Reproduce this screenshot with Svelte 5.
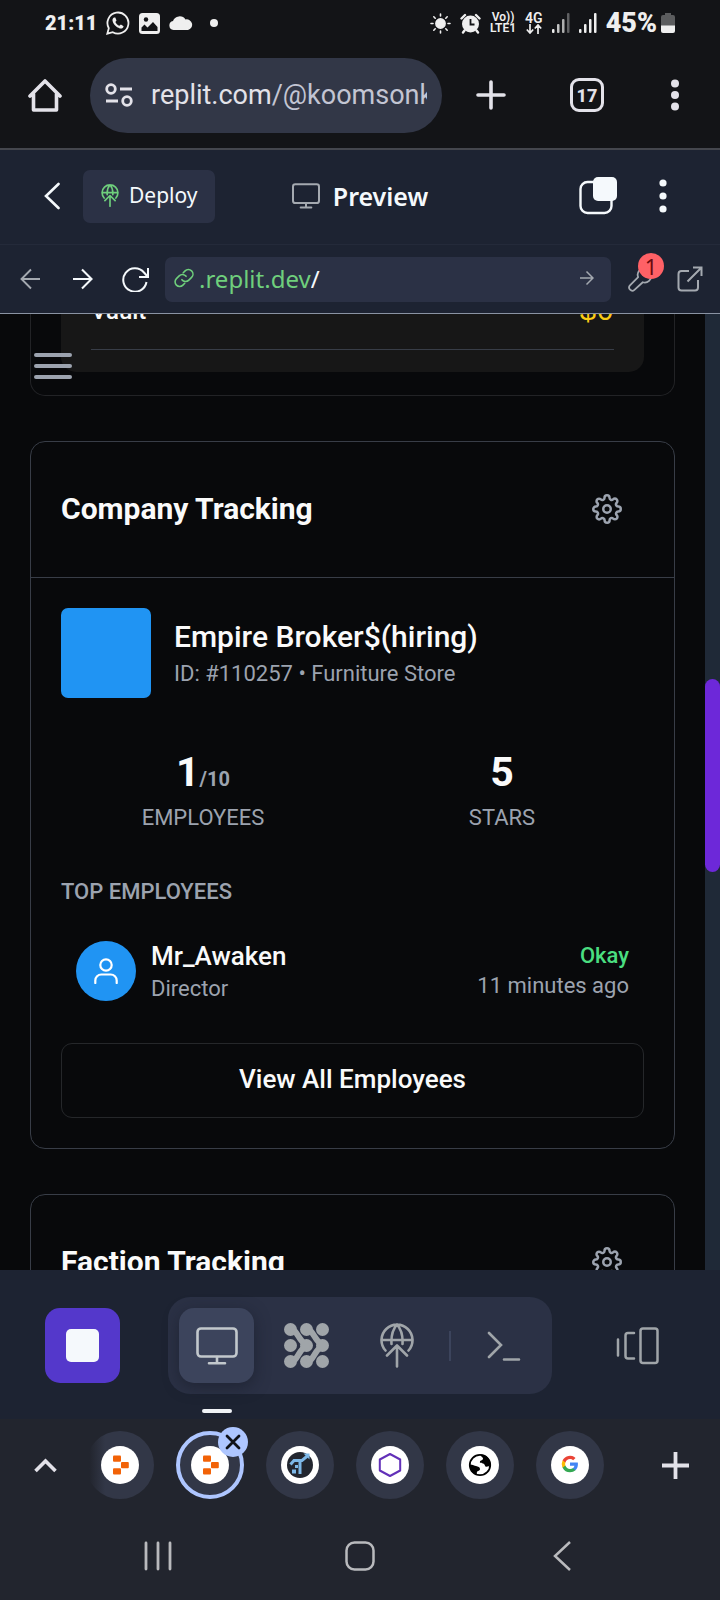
<script>
  const stats = [
    { value: '1', of: '/10', label: 'EMPLOYEES' },
    { value: '5', of: '', label: 'STARS' }
  ];
  const tabs = ['replit', 'replit', 'trade', 'hexagon', 'globe', 'google'];
  const active = 1;
  const dots = [6.5, 22.5, 38.5];
</script>

{#snippet monitor(w, h, stroke)}
  <svg width={w} height={h} viewBox="0 0 42 38" fill="none" stroke="currentColor" stroke-width={stroke} stroke-linecap="round">
    <rect x="1.5" y="1.5" width="39" height="28" rx="3.5" /><path d="M21 30v6M13 36.3h16" />
  </svg>
{/snippet}

{#snippet deploy(w, h, stroke)}
  <svg width={w} height={h} viewBox="0 0 34 45" fill="none" stroke="currentColor" stroke-width={stroke} stroke-linecap="round" stroke-linejoin="round">
    <path d="M5.5 27.5A15.5 15.5 0 1 1 28.5 27.5M2 17h30M17 1.5c-4 4.500-6 11-5.500 19.500M17 1.500c4 4.500 6 11 5.500 19.500M17 43.500V22.500M7 32.500l10-10 10 10" />
  </svg>
{/snippet}

{#snippet gear()}
  <svg width="30" height="30" viewBox="0 0 24 24" fill="none" stroke="currentColor" stroke-width="2" stroke-linecap="round" stroke-linejoin="round">
    <circle cx="12" cy="12" r="3" />
    <path d="M19.4 15a1.65 1.65 0 0 0 .33 1.82l.06.06a2 2 0 0 1 0 2.83 2 2 0 0 1-2.83 0l-.06-.06a1.65 1.65 0 0 0-1.82-.33 1.65 1.65 0 0 0-1 1.51V21a2 2 0 0 1-2 2 2 2 0 0 1-2-2v-.09A1.65 1.65 0 0 0 9 19.4a1.65 1.65 0 0 0-1.82.33l-.06.06a2 2 0 0 1-2.83 0 2 2 0 0 1 0-2.83l.06-.06a1.65 1.65 0 0 0 .33-1.82 1.65 1.65 0 0 0-1.51-1H3a2 2 0 0 1-2-2 2 2 0 0 1 2-2h.09A1.65 1.65 0 0 0 4.6 9a1.65 1.65 0 0 0-.33-1.82l-.06-.06a2 2 0 0 1 0-2.83 2 2 0 0 1 2.83 0l.06.06a1.65 1.65 0 0 0 1.82.33H9a1.65 1.65 0 0 0 1-1.51V3a2 2 0 0 1 2-2 2 2 0 0 1 2 2v.09a1.65 1.65 0 0 0 1 1.51 1.65 1.65 0 0 0 1.82-.33l.06-.06a2 2 0 0 1 2.83 0 2 2 0 0 1 0 2.83l-.06.06a1.65 1.65 0 0 0-.33 1.82V9a1.65 1.65 0 0 0 1.51 1H21a2 2 0 0 1 2 2 2 2 0 0 1-2 2h-.09a1.65 1.65 0 0 0-1.51 1z" />
  </svg>
{/snippet}

{#snippet favicon(kind)}
  <svg width="38" height="38" viewBox="0 0 38 38" fill="none">
    <circle cx="19" cy="19" r="19" fill="#fff" />
    {#if kind === 'replit'}
      <g fill="#f26207">
        <rect x="12" y="9.500" width="8" height="6.300" rx="1" />
        <rect x="20" y="16" width="7.800" height="6.200" rx="1" />
        <rect x="12" y="22.300" width="8" height="6.300" rx="1" />
      </g>
    {:else if kind === 'trade'}
      <circle cx="19" cy="19" r="13" fill="#22262f" />
      <path d="M9.500 18.500l3.500-4h8l6-5M19 14.500v13.500" stroke="#7db8e8" stroke-width="3" />
      <path d="M22.500 7.500h6v6z" fill="#7db8e8" /><path d="M11 23.500h4v4h-4zM14 19h3v3h-3z" fill="#7db8e8" />
    {:else if kind === 'hexagon'}
      <path d="M19 8l10.200 5.500v11L19 30 8.800 24.500v-11z" stroke="#6230b8" stroke-width="2" stroke-linejoin="round" />
    {:else if kind === 'globe'}
      <circle cx="19" cy="19" r="10.200" stroke="#000" stroke-width="1.800" />
      <path d="M20 8.500c6 .5 10 5 9.500 10.500-1.500 2-3.500 1-4.500 2-1.500-1-1-3-3-3.500-2-1-3.500.5-3-2 .5-1.500 3-1 3-3 0-1.500-2-1-2-4z" fill="#000" />
      <path d="M9 18.500c3 0 4.500 1.500 6 1.500 2 .5 4 1 4 3s-2.500 1.500-3 3c-.5 1 0 2-.5 3C11 27.500 8.500 23 9 18.500z" fill="#000" />
    {:else}
      <g transform="translate(10 9) scale(.75)">
        <path d="M22.560 12.250c0-.78-.07-1.530-.2-2.250H12v4.260h5.920a5.060 5.060 0 0 1-2.200 3.320v2.770h3.570c2.080-1.920 3.270-4.740 3.270-8.100z" fill="#4285f4" />
        <path d="M12 23c2.970 0 5.460-.98 7.280-2.660l-3.570-2.770c-.98.660-2.230 1.060-3.710 1.060-2.860 0-5.290-1.930-6.160-4.530H2.180v2.840A11 11 0 0 0 12 23z" fill="#34a853" />
        <path d="M5.840 14.090a6.600 6.600 0 0 1 0-4.180V7.070H2.180a11 11 0 0 0 0 9.860z" fill="#fbbc05" />
        <path d="M12 5.380c1.620 0 3.060.56 4.210 1.640l3.150-3.150A11 11 0 0 0 2.180 7.070l3.660 2.840C6.710 7.310 9.140 5.380 12 5.380z" fill="#ea4335" />
      </g>
    {/if}
  </svg>
{/snippet}

<div class="screen">
  <div class="status">
    <div class="status-group">
      <span class="clock">21:11</span>
      <svg width="24" height="24" viewBox="0 0 24 24" fill="none" stroke="currentColor" stroke-width="1.800">
        <path d="M1.300 22.700l1.500-5.500A10.500 10.500 0 1 1 6.800 21.200z" />
        <path d="M8.200 6.500c-.8.200-1.900 1.300-1.700 3 .5 3.400 3.600 6.700 7.400 7.900 1.800.5 3.400-.5 3.700-2.200l-2.700-1.700-1.500 1.300c-1.900-.8-3.200-2-4-3.900l1.100-1.300-1.200-3z" fill="currentColor" stroke="none" />
      </svg>
      <svg width="21" height="21" viewBox="0 0 21 21">
        <rect width="21" height="21" rx="3.500" fill="currentColor" />
        <circle cx="7" cy="6.500" r="2.200" fill="#131417" /><path d="M2.500 18v-3.500l3-3 3 3 5.500-5.500 4.500 5V18z" fill="#131417" />
      </svg>
      <svg width="24" height="14" viewBox="0 0 24 14" fill="currentColor"><path d="M4.500 14A4.500 4.500 0 0 1 4 5.100 7 7 0 0 1 16.500 3.500 5 5 0 0 1 19 14z" /></svg>
      <i class="notice"></i>
    </div>
    <div class="status-group">
      <svg width="21" height="21" viewBox="0 0 21 21" stroke="currentColor" stroke-width="1.600" stroke-linecap="round">
        <circle cx="10.500" cy="10.500" r="4.600" fill="currentColor" />
        <path d="M10.500 1v2M10.500 18v2M1 10.500h2M18 10.500h2M3.800 3.800l1.400 1.400M15.800 15.800l1.400 1.400M3.800 17.200l1.400-1.400M15.800 5.200l1.400-1.400" />
      </svg>
      <svg width="21" height="21" viewBox="0 0 21 21" fill="currentColor">
        <circle cx="10.500" cy="11" r="8.500" /><path d="M1.500 5.500L5 2M19.500 5.500L16 2M4.500 17.500L3 19.500M16.500 17.500l1.500 2" stroke="currentColor" stroke-width="2.400" stroke-linecap="round" />
        <path d="M10.500 6v5.500h4" fill="none" stroke="#131417" stroke-width="1.800" />
      </svg>
      <span class="net"><span>Vo))</span><span>LTE1</span></span>
      <span class="net gen"><span>4G</span>
        <svg width="16" height="10" viewBox="0 0 16 10" fill="none" stroke="currentColor" stroke-width="1.700"><path d="M4 0v9M.8 5.500L4 9l3.200-3.500M12 10V1M8.800 4.500L12 1l3.200 3.500" /></svg>
      </span>
      <svg width="18" height="20" viewBox="0 0 18 20" fill="currentColor"><rect y="16" width="2.500" height="4" rx="1" /><rect x="5" y="11" width="2.500" height="9" rx="1" opacity=".8" /><rect x="10" y="6" width="2.500" height="14" rx="1" opacity=".7" /><rect x="15" width="2.500" height="20" rx="1" opacity=".35" /></svg>
      <svg width="18" height="20" viewBox="0 0 18 20" fill="currentColor"><rect y="16" width="2.500" height="4" rx="1" /><rect x="5" y="11" width="2.500" height="9" rx="1" /><rect x="10" y="6" width="2.500" height="14" rx="1" /><rect x="15" width="2.500" height="20" rx="1" /></svg>
      <span class="power">45%
        <svg width="14" height="20" viewBox="0 0 14 20"><path d="M4 0h6v2h2a2 2 0 0 1 2 2v9H0V4a2 2 0 0 1 2-2h2z" fill="#5b5c5e" /><path d="M0 12.500h14V18a2 2 0 0 1-2 2H2a2 2 0 0 1-2-2z" fill="currentColor" /></svg>
      </span>
    </div>
  </div>

  <header class="browser">
    <button aria-label="Home">
      <svg width="34" height="34" viewBox="0 0 34 34" fill="none" stroke="currentColor" stroke-width="3.600" stroke-linecap="round" stroke-linejoin="round"><path d="M2 18L17 3l15 15M5.500 16v16h23V16" /></svg>
    </button>
    <button class="omnibox" aria-label="Address">
      <svg width="28" height="24" viewBox="0 0 28 24" fill="none" stroke="currentColor" stroke-width="2.800"><circle cx="6" cy="6" r="4.300" /><path d="M15 6h12M1 18h12" /><circle cx="22" cy="18" r="4.300" /></svg>
      <span class="url">replit.com<em>/@koomsonk</em></span>
    </button>
    <div class="browser-actions">
      <button aria-label="New tab"><svg width="30" height="30" viewBox="0 0 30 30" stroke="currentColor" stroke-width="3.600" stroke-linecap="round"><path d="M15 2v26M2 15h26" /></svg></button>
      <button class="count" aria-label="Open tabs">17</button>
      <button aria-label="Browser menu"><svg width="14" height="32" viewBox="0 0 14 32" fill="currentColor"><circle cx="7" cy="4.500" r="4" /><circle cx="7" cy="16" r="4" /><circle cx="7" cy="27.500" r="4" /></svg></button>
    </div>
  </header>

  <div class="workspace">
    <div class="lead">
      <button class="back" aria-label="Back"><svg width="16" height="28" viewBox="0 0 16 28" fill="none" stroke="currentColor" stroke-width="2.600" stroke-linecap="round"><path d="M14.500 2L2 14l12.500 12" /></svg></button>
      <button class="deploy"><span class="green">{@render deploy(18, 23, 3.2)}</span>Deploy</button>
    </div>
    <div class="title"><span class="dim">{@render monitor(28, 26, 3)}</span>Preview</div>
    <div class="tail">
      <button aria-label="Tabs"><svg width="38" height="38" viewBox="0 0 38 38" fill="none"><rect x="1.500" y="5" width="31" height="31" rx="7" stroke="currentColor" stroke-width="2.400" /><rect x="14" width="24" height="24" rx="5" fill="currentColor" /></svg></button>
      <button aria-label="Menu"><svg width="18" height="34" viewBox="0 0 18 34" fill="currentColor"><circle cx="9" cy="4" r="3.600" /><circle cx="9" cy="17" r="3.600" /><circle cx="9" cy="30" r="3.600" /></svg></button>
    </div>
  </div>

  <div class="devbar">
    <button class="dim" aria-label="Previous page"><svg width="20" height="22" viewBox="0 0 20 22" fill="none" stroke="currentColor" stroke-width="1.900"><path d="M20 11H1.500M11 1.500L1.500 11l9.500 9.500" /></svg></button>
    <button aria-label="Next page"><svg width="20" height="22" viewBox="0 0 20 22" fill="none" stroke="currentColor" stroke-width="2.100"><path d="M0 11h18.500M9 1.500l9.500 9.500L9 20.500" /></svg></button>
    <button aria-label="Reload"><svg width="28" height="26" viewBox="0 0 28 26" fill="none" stroke="currentColor" stroke-width="2"><path d="M26 2v9h-9M25.500 10.500L22 6.500A11.700 11.700 0 1 0 24.500 16" /></svg></button>
    <label class="address">
      <svg width="20" height="20" viewBox="0 0 24 24" fill="none" stroke="currentColor" stroke-width="1.900" stroke-linecap="round"><path d="M9.500 14a5.500 5.500 0 0 0 8.300.6l3.300-3.300a5.500 5.500 0 0 0-7.800-7.800l-2.200 2.200M14.500 10a5.500 5.500 0 0 0-8.300-.6l-3.300 3.300a5.500 5.500 0 0 0 7.800 7.800l2.200-2.200" /></svg>
      <span>.replit.dev</span>
      <input type="text" value="/" aria-label="Path" />
      <svg class="go" width="14" height="16" viewBox="0 0 14 16" fill="none" stroke="currentColor" stroke-width="1.500"><path d="M0 8h13M6.500 1.500L13 8l-6.500 6.500" /></svg>
    </label>
    <button class="dim tools" aria-label="Developer tools">
      <svg width="26" height="28" viewBox="0 0 28 28" fill="none" stroke="currentColor" stroke-width="1.900" stroke-linejoin="round"><path d="M19.500 2.500l-2 6 3 3 5.500-2a7 7 0 0 1-9 8L8 25.700a3.400 3.400 0 0 1-4.800-4.800L12 12a7 7 0 0 1 7.500-9.500z" /></svg>
      <span class="badge">1</span>
    </button>
    <button class="dim" aria-label="Open in new tab"><svg width="26" height="26" viewBox="0 0 26 26" fill="none" stroke="currentColor" stroke-width="2"><path d="M12 5H4.500A3 3 0 0 0 1.500 8v13.500a3 3 0 0 0 3 3h13.500a3 3 0 0 0 3-3V14M16 1.500h8.500V10M24.500 1.500L10.500 15.500" /></svg></button>
  </div>

  <main class="preview">
    <div class="page">
      <section class="card vault-card">
        <div class="vault-box"><div class="vault"><span>Vault</span><span class="money">$0</span></div></div>
      </section>

      <section class="card">
        <div class="card-head"><h2>Company Tracking</h2><button aria-label="Company settings">{@render gear()}</button></div>
        <div class="card-body">
          <div class="company">
            <div class="logo"></div>
            <div><h3>Empire Broker$(hiring)</h3><p>ID: #110257 • Furniture Store</p></div>
          </div>
          <div class="stats">
            {#each stats as s}
              <div><strong>{s.value}<small>{s.of}</small></strong><p>{s.label}</p></div>
            {/each}
          </div>
          <h4>TOP EMPLOYEES</h4>
          <div class="member">
            <div class="avatar"><svg width="24" height="26" viewBox="0 0 24 26" fill="none" stroke="currentColor" stroke-width="2.200" stroke-linecap="round"><circle cx="12" cy="7" r="5.700" /><path d="M1.300 25v-2.500a6 6 0 0 1 6-6h9.400a6 6 0 0 1 6 6V25" /></svg></div>
            <div class="who"><b>Mr_Awaken</b><p>Director</p></div>
            <div class="when"><p class="okay">Okay</p><p>11 minutes ago</p></div>
          </div>
          <button class="all">View All Employees</button>
        </div>
      </section>

      <section class="card">
        <div class="card-head"><h2>Faction Tracking</h2><button aria-label="Faction settings">{@render gear()}</button></div>
      </section>
    </div>
    <div class="track"><div class="thumb"></div></div>
    <button class="menu" aria-label="Open menu"><i></i><i></i><i></i></button>
  </main>

  <nav class="dock" aria-label="Workspace tools">
    <button class="stop" aria-label="Stop"><i></i></button>
    <div class="tools-group">
      <button class="current" aria-label="Preview">{@render monitor(42, 38, 2.6)}</button>
      <button aria-label="Agent">
        <svg width="45" height="45" viewBox="0 0 45 45" fill="currentColor">
          {#each dots as x}{#each dots as y}<circle cx={x} cy={y} r="6.500" />{/each}{/each}
          <path d="M6.500 6.500C14 7 13 16 22.500 22.500C13 29 14 38 6.500 38.500M22.500 6.500C30 7 29 16 38.500 22.500C29 29 30 38 22.500 38.500" fill="none" stroke="currentColor" stroke-width="6" stroke-linejoin="round" />
        </svg>
      </button>
      <button aria-label="Deployments">{@render deploy(34, 45, 2.6)}</button>
      <span class="rule"></span>
      <button aria-label="Shell"><svg width="34" height="30" viewBox="0 0 34 30" fill="none" stroke="currentColor" stroke-width="2.600" stroke-linecap="round"><path d="M2 2l12 12L2 26M17 28.500h15" /></svg></button>
    </div>
    <button class="switcher" aria-label="Switch pane"><svg width="43" height="38" viewBox="0 0 43 38" fill="none" stroke="currentColor" stroke-width="2.500" stroke-linecap="round"><rect x="24.500" y="1.500" width="17" height="34.500" rx="2.500" /><path d="M18 6h-6a2.500 2.500 0 0 0-2.500 2.500v20.500a2.500 2.500 0 0 0 2.500 2.500h6M2 12.500v16" /></svg></button>
  </nav>

  <div class="tabstrip">
    <button class="side" aria-label="Expand tabs"><svg width="23" height="15" viewBox="0 0 23 15" fill="none" stroke="currentColor" stroke-width="3.600"><path d="M1.500 13l10-10 10 10" /></svg></button>
    <div class="tabs">
      {#each tabs as t, i}
        <div class="slot">
          <button class="tab" class:chosen={i === active} class:faded={i === 0} aria-label={`Tab ${i + 1}`}>{@render favicon(t)}</button>
          {#if i === active}
            <button class="close" aria-label="Close tab"><svg width="16" height="16" viewBox="0 0 16 16" stroke="currentColor" stroke-width="2.800" stroke-linecap="round"><path d="M2 2l12 12M14 2L2 14" /></svg></button>
          {/if}
        </div>
      {/each}
    </div>
    <button class="side" aria-label="Add tab"><svg width="27" height="27" viewBox="0 0 27 27" stroke="currentColor" stroke-width="3.800"><path d="M13.500 0v27M0 13.500h27" /></svg></button>
  </div>

  <nav class="system" aria-label="System">
    <button aria-label="Recent apps"><svg width="30" height="30" viewBox="0 0 30 30" stroke="currentColor" stroke-width="2.800" stroke-linecap="round"><path d="M3 2v26M15 2v26M27 2v26" /></svg></button>
    <button aria-label="Home screen"><svg width="30" height="30" viewBox="0 0 30 30" fill="none" stroke="currentColor" stroke-width="2.500"><rect x="1.500" y="1.500" width="27" height="27" rx="8" /></svg></button>
    <button aria-label="Go back"><svg width="18" height="30" viewBox="0 0 18 30" fill="none" stroke="currentColor" stroke-width="2.500"><path d="M17 1L2 15l15 14" /></svg></button>
  </nav>
</div>

<style>
  :global(body) { margin: 0; background: #08090b; }
  * { box-sizing: border-box; }
  .screen { display: flex; flex-direction: column; height: 100vh; font-family: Roboto, "Liberation Sans", sans-serif; color: #fff; }
  button { border: 0; padding: 0; margin: 0; background: none; color: inherit; font: inherit; display: flex; align-items: center; justify-content: center; flex: none; }
  svg { display: block; flex: none; }
  h2, h3, h4, p { margin: 0; }

  .status { flex: none; height: 46px; padding: 0 45px; display: flex; align-items: center; justify-content: space-between; background: #131417; color: #efefef; }
  .status-group { display: flex; align-items: center; gap: 9px; }
  .clock { font-size: 20px; font-weight: 900; }
  .notice { width: 8px; height: 8px; margin-left: 8px; border-radius: 50%; background: currentColor; }
  .net { display: flex; flex-direction: column; align-items: center; font-size: 12px; line-height: 11px; font-weight: 600; }
  .gen { font-size: 14px; }
  .power { display: flex; align-items: center; gap: 4px; font-size: 27px; line-height: 30px; font-weight: 900; }

  .browser { flex: none; height: 104px; padding: 0 38px 4px 28px; display: flex; align-items: center; background: #131417; color: #e3e2e9; border-bottom: 2px solid #44464d; }
  .omnibox { flex: 1; min-width: 0; height: 75px; margin: 0 34px 0 28px; padding: 0 15px; gap: 18px; border-radius: 38px; background: #323747; justify-content: flex-start; }
  .url { flex: 1; min-width: 0; overflow: hidden; white-space: nowrap; text-align: left; font-size: 27px; line-height: 36px; }
  .url em { font-style: normal; color: #c3c5d3; }
  .browser-actions { display: flex; align-items: center; gap: 64px; }
  .count { width: 34px; height: 34px; border: 3px solid currentColor; border-radius: 9px; font-size: 18px; font-weight: 800; }

  .workspace { flex: none; height: 95px; padding: 0 48px 2px 36px; display: grid; grid-template-columns: 1fr auto 1fr; align-items: center; background: #1d2332; color: #f5f9fc; border-bottom: 1px solid #242a3a; font-family: "Noto Sans", sans-serif; }
  .lead, .tail, .title { display: flex; align-items: center; }
  .lead { gap: 15px; }
  .back { width: 32px; height: 53px; }
  .deploy { height: 53px; padding: 0 17px 2px 18px; gap: 10px; border-radius: 7px; background: #2b3145; font-size: 21px; }
  .green { color: #6fcf7c; }
  .dim { color: #a4a9b0; }
  .title { gap: 13px; margin-left: 12px; font-size: 25px; font-weight: 600; }
  .tail { gap: 37px; justify-content: flex-end; }

  .devbar { flex: none; height: 69px; padding: 0 15px; display: flex; align-items: center; background: #1d2332; color: #f5f9fc; border-bottom: 1px solid #8a93a3; font-family: "Noto Sans", sans-serif; }
  .devbar button { width: 30px; height: 45px; }
  .devbar button + button { margin-left: 23px; }
  .address { flex: 1; min-width: 0; height: 45px; margin: 0 14px; padding: 0 17px 2px 9px; display: flex; align-items: center; border-radius: 7px; background: #2b3145; color: #6fcf7c; font-size: 24px; }
  .address span { margin-left: 5px; }
  .address input { flex: 1; min-width: 0; border: 0; padding: 0; background: none; color: #f5f9fc; font: inherit; outline: none; }
  .go { color: #a4a9b0; }
  .tools { position: relative; }
  .badge { position: absolute; left: 13px; top: -4px; width: 26px; height: 26px; border-radius: 50%; background: #ff6166; color: #6b0a0e; font-size: 22px; line-height: 26px; text-align: center; }
  .devbar .tools + button { margin-left: 20px; }

  .preview { position: relative; flex: 1; min-height: 0; overflow: hidden; display: flex; background: #08090b; }
  .page { flex: 1; min-width: 0; padding: 0 30px; display: flex; flex-direction: column; gap: 45px; }
  .card { border: 1px solid #383d47; border-radius: 15px; color: #fafafa; }
  .vault-card { margin-top: -21px; padding: 0 30px 23px; border-top: 0; border-color: #222326; }
  .vault-box { padding: 0 30px 22px; background: #171717; border-radius: 0 0 15px 15px; }
  .vault { display: flex; align-items: flex-start; justify-content: space-between; padding-bottom: 16px; border-bottom: 1px solid #383d47; font-size: 24px; line-height: 36px; font-weight: 500; }
  .money { color: #facc15; font-family: "Liberation Mono", monospace; font-size: 29px; line-height: 40px; }
  .card-head { height: 136px; padding: 0 30px 2px; display: flex; align-items: center; justify-content: space-between; border-bottom: 1px solid #383d47; }
  .card-head button { width: 75px; height: 75px; color: #9ca3af; }
  h2 { font-size: 30px; line-height: 40px; font-weight: 700; }
  .card-body { padding: 30px; }
  p { font-size: 22px; line-height: 30px; color: #9ca3af; }
  .company { display: flex; align-items: center; gap: 23px; }
  .logo { width: 90px; height: 90px; border-radius: 7px; background: #2094f3; }
  h3 { font-size: 30px; line-height: 40px; font-weight: 500; margin-bottom: 2px; }
  .stats { display: grid; grid-template-columns: 1fr 1fr; gap: 15px; margin-top: 52px; text-align: center; }
  strong { display: block; font-size: 41px; line-height: 45px; font-weight: 700; margin-bottom: 8px; }
  small { font-size: 20px; line-height: 20px; color: #9ca3af; }
  h4 { margin-top: 44px; font-size: 22px; line-height: 30px; font-weight: 500; color: #9ca3af; }
  .member { display: flex; align-items: center; gap: 15px; margin-top: 19px; padding: 12px 15px; }
  .avatar { width: 60px; height: 60px; border-radius: 50%; background: #2094f3; color: #fff; display: grid; place-items: center; }
  .who { flex: 1; }
  b { display: block; font-size: 26px; line-height: 36px; font-weight: 500; }
  .when { text-align: right; }
  .okay { color: #4ade80; font-weight: 500; }
  .all { width: 100%; height: 75px; margin-top: 27px; padding-bottom: 4px; border: 1px solid #25272a; border-radius: 11px; font-size: 26px; font-weight: 500; }
  .track { flex: none; width: 15px; background: #1f2937; padding-top: 365px; }
  .thumb { height: 193px; border-radius: 8px; background: #6d28d9; }
  .menu { position: absolute; left: 34px; top: 39px; width: 38px; flex-direction: column; gap: 7px; }
  .menu i { width: 100%; height: 4px; border-radius: 2px; background: #9ca3af; }

  .dock { flex: none; height: 149px; padding: 2px 45px 0; display: flex; align-items: center; justify-content: space-between; background: #1d2332; color: #a0a5a9; }
  .stop { width: 75px; height: 75px; border-radius: 15px; background: #5438cb; }
  .stop i { width: 33px; height: 33px; border-radius: 5px; background: #f5f9fc; }
  .tools-group { height: 97px; padding: 0 11px; display: flex; align-items: center; gap: 15px; border-radius: 22px; background: #2b3145; }
  .tools-group button { position: relative; width: 75px; height: 75px; border-radius: 15px; }
  .tools-group .current { background: #3c445c; color: #c2c8cc; box-shadow: 0 4px 15px rgba(20, 24, 36, .5); }
  .current::after { content: ""; position: absolute; left: 23px; top: 101px; width: 30px; height: 4px; border-radius: 2px; background: #f0f3f7; }
  .rule { width: 2px; height: 30px; background: #3c445c; }
  .switcher { width: 75px; height: 75px; }

  .tabstrip { flex: none; height: 92px; display: flex; align-items: center; justify-content: space-between; background: #22252e; color: #e3e2e9; }
  .side { width: 90px; height: 90px; }
  .tabs { flex: 1; display: flex; justify-content: space-between; margin-left: -4px; padding-right: 26px; }
  .slot { position: relative; }
  .tab { width: 68px; height: 68px; border-radius: 50%; background: #323747; }
  .faded { background: linear-gradient(90deg, #22252e 5%, #323747 28%); }
  .chosen { border: 4px solid #aec6ff; }
  .close { position: absolute; right: -4px; top: -4px; width: 30px; height: 30px; border-radius: 50%; background: #aec6ff; color: #101218; }

  .system { flex: none; height: 89px; padding: 0 57px; display: grid; grid-template-columns: repeat(3, 1fr); align-items: center; background: #22252e; color: #b9babd; }
</style>
